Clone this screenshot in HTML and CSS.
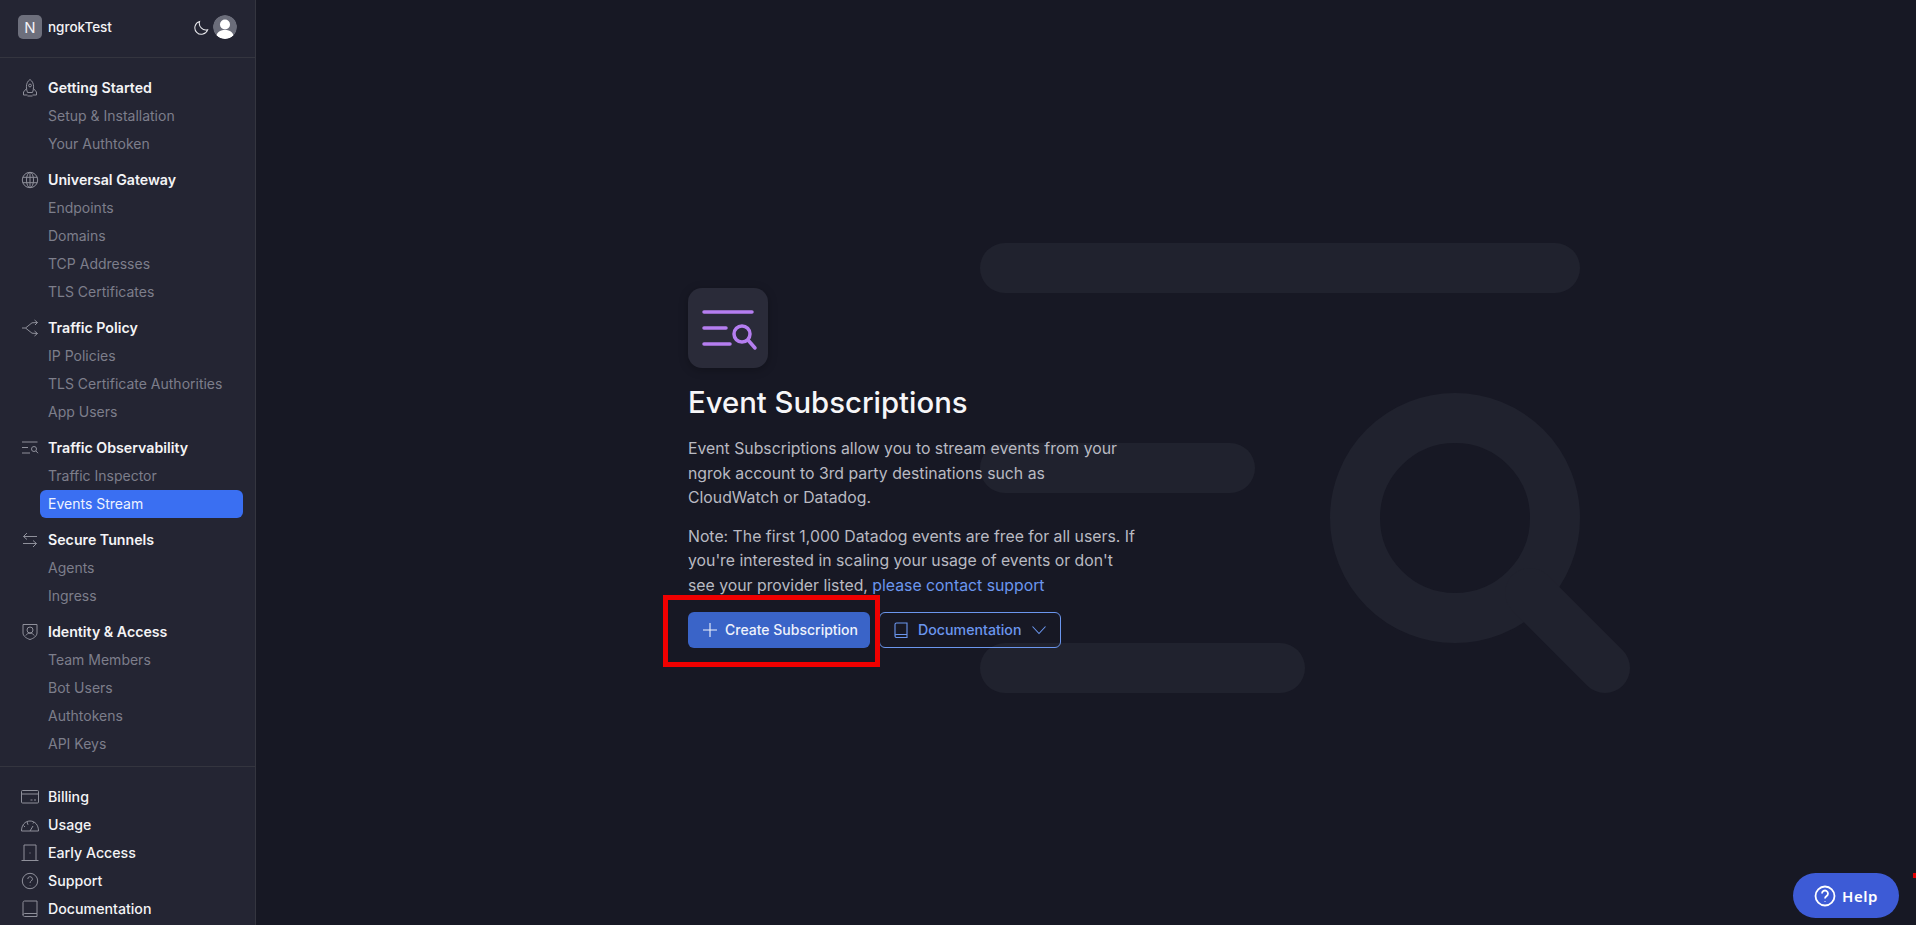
FILE: index.html
```html
<!DOCTYPE html>
<html lang="en">
<head>
<meta charset="utf-8">
<title>Event Subscriptions</title>
<link rel="stylesheet" href="styles.css">
</head>
<body>
<div class="app">
  <aside class="sidebar">
    <header class="account">
      <span class="avatar">N</span>
      <span class="account-name">ngrokTest</span>
      <svg class="moon" viewBox="0 0 16 16"><path d="M6 1.500a7 7 0 0 0 8.600 8.800A7 7 0 1 1 6 1.500Z"/></svg>
      <svg class="user" viewBox="0 0 24 24"><circle cx="12" cy="12" r="12" fill="#6b6d7a"/><circle cx="12" cy="9.500" r="5" fill="#fff"/><path d="M3.500 20.500c1-4 4.500-5.500 8.500-5.500s7.500 1.500 8.500 5.500A12 12 0 0 1 12 24a12 12 0 0 1-8.500-3.500Z" fill="#fff"/></svg>
    </header>
    <nav class="nav">
      <div class="group">
        <div class="head"><svg class="ico" viewBox="0 0 18 18"><path d="M9 .5c2.600 1.800 3.600 4.400 3.600 7.300 0 2.200-.5 4.200-1.100 5.700h-5c-.6-1.500-1.100-3.500-1.100-5.700C5.400 4.900 6.400 2.300 9 .5Z"/><circle cx="9" cy="6.500" r="1.400"/><path d="M5.600 9.500 2.500 13v3h4M12.400 9.500l3.100 3.500v3h-4M6.500 17h5"/></svg>Getting Started</div>
        <a class="sub">Setup &amp; Installation</a>
        <a class="sub">Your Authtoken</a>
      </div>
      <div class="group">
        <div class="head"><svg class="ico" viewBox="0 0 18 18"><circle cx="9" cy="9" r="7.700"/><ellipse cx="9" cy="9" rx="3.500" ry="7.700"/><path d="M1.800 6.300h14.400M1.800 11.700h14.400M9 1.300v15.400"/></svg>Universal Gateway</div>
        <a class="sub">Endpoints</a>
        <a class="sub">Domains</a>
        <a class="sub">TCP Addresses</a>
        <a class="sub">TLS Certificates</a>
      </div>
      <div class="group">
        <div class="head"><svg class="ico" viewBox="0 0 18 18"><path d="M1 9h3.500l6.500-5.200 5.500-.3M4.500 9l6.500 5.200 5.500.3M13.500 1l3 2.500-2.500 2.500M13.500 12l3 2.500-3 2.500"/></svg>Traffic Policy</div>
        <a class="sub">IP Policies</a>
        <a class="sub">TLS Certificate Authorities</a>
        <a class="sub">App Users</a>
      </div>
      <div class="group">
        <div class="head"><svg class="ico" viewBox="0 0 18 18"><path d="M1 3h15.500M1 8.500h6M1 14h8"/><circle cx="13" cy="10" r="2.500"/><path d="m15 12 2 2.200"/></svg>Traffic Observability</div>
        <a class="sub">Traffic Inspector</a>
        <a class="sub active">Events Stream</a>
      </div>
      <div class="group">
        <div class="head"><svg class="ico" viewBox="0 0 18 18"><path d="M16 5.500H2.500L6 2M2.500 5.500 6 8.500M2 12.500h13.500L12 9.500M15.500 12.500 12 16"/></svg>Secure Tunnels</div>
        <a class="sub">Agents</a>
        <a class="sub">Ingress</a>
      </div>
      <div class="group">
        <div class="head"><svg class="ico" viewBox="0 0 18 18"><path d="M2 1.500h14v8.500c0 3-3.500 5.500-7 6.500C5.500 15.500 2 13 2 10V1.500Z"/><circle cx="9" cy="7" r="3"/><path d="M4.800 12.500c.8-1.500 2.400-2.300 4.200-2.300s3.400.8 4.200 2.300"/></svg>Identity &amp; Access</div>
        <a class="sub">Team Members</a>
        <a class="sub">Bot Users</a>
        <a class="sub">Authtokens</a>
        <a class="sub">API Keys</a>
      </div>
    </nav>
    <footer class="bottom">
      <div class="head"><svg class="ico" viewBox="0 0 18 18"><rect x="0.500" y="2.500" width="17" height="12.500" rx="1"/><path d="M.5 6h17M9.500 12h2M13 12h2"/></svg>Billing</div>
      <div class="head"><svg class="ico" viewBox="0 0 18 18"><path d="M.5 15c0-6 3.500-10 8.500-10s8.500 4 8.500 10ZM9 15l3-5M6 5.800l1 3M13 6l-1 1.500M2.500 9.500 4 11"/></svg>Usage</div>
      <div class="head"><svg class="ico" viewBox="0 0 18 18"><path d="M.5 16.500h17M3 16.500V1h12v15.500"/><path d="M9 8.500v1"/></svg>Early Access</div>
      <div class="head"><svg class="ico" viewBox="0 0 18 18"><circle cx="9" cy="9" r="7.700"/><path d="M6.800 7a2.300 2.300 0 1 1 3.400 2c-.8.500-1.200 1-1.200 2M9 13v.4"/></svg>Support</div>
      <div class="head"><svg class="ico" viewBox="0 0 18 18"><path d="M2 15V2.500C2 1.700 2.700 1 3.500 1H16v12.500H3.500C2.700 13.500 2 14.200 2 15c0 .8.700 1.500 1.500 1.500H16v-3"/></svg>Documentation</div>
    </footer>
  </aside>
  <main class="main">
    <svg class="art" viewBox="0 0 700 500" aria-hidden="true">
      <rect x="20" y="23" width="600" height="50" rx="25"/>
      <rect x="20" y="223" width="275" height="50" rx="25"/>
      <rect x="20" y="423" width="325" height="50" rx="25"/>
      <circle cx="495" cy="298" r="100" class="ring"/>
      <path d="M570 373 645 448" class="ring"/>
    </svg>
    <section class="empty">
      <div class="badge">
        <svg viewBox="0 0 80 80"><path d="M16 24h48M16 40h22M16 56h26"/><circle cx="54" cy="46" r="8"/><path d="m60 52 7 8"/></svg>
      </div>
      <h1>Event Subscriptions</h1>
      <p>Event Subscriptions allow you to stream events from your ngrok account to 3rd party destinations such as CloudWatch or Datadog.</p>
      <p class="note">Note: The first 1,000 Datadog events are free for all users. If you're interested in scaling your usage of events or don't see your provider listed, <a class="link">please contact support</a></p>
      <div class="actions">
        <button class="btn primary"><svg viewBox="0 0 16 16"><path d="M8 1v14M1 8h14"/></svg>Create Subscription</button>
        <button class="btn outline"><svg viewBox="0 0 16 16"><path d="M2 14V2.500C2 1.700 2.700 1 3.500 1H14v11.500H3.500C2.700 12.500 2 13.200 2 14c0 .8.700 1.500 1.500 1.500H14v-3"/></svg>Documentation<svg class="chev" viewBox="0 0 16 16"><path d="m1.500 4.500 6.500 7 6.500-7"/></svg></button>
        <span class="mark"></span>
      </div>
    </section>
    <button class="help"><svg viewBox="0 0 22 22"><circle cx="11" cy="11" r="9.500"/><path d="M8 8.500a3 3 0 1 1 4.500 2.600c-1 .6-1.500 1.200-1.500 2.400M11 16v.4"/></svg>Help</button>
    <span class="dot"></span>
  </main>
</div>
</body>
</html>
```
FILE: styles.css
```css
* { box-sizing: border-box; }
html, body { margin: 0; height: 100%; }
body { background: #171824; color: #fff; font-family: Inter, "Noto Sans", sans-serif; overflow: hidden; }
.app { display: flex; height: 925px; }
.sidebar { width: 256px; flex: none; background: #242533; border-right: 1px solid #34353f; display: flex; flex-direction: column; }
.account { height: 58px; flex: none; display: flex; align-items: center; padding: 0 18px 3px; border-bottom: 1px solid #34353f; }
.avatar { width: 24px; height: 24px; border-radius: 5px; background: #6d6f7c; display: flex; align-items: center; justify-content: center; font-size: 15px; color: #f2f2f5; }
.account-name { margin-left: 6px; font-size: 13.500px; font-weight: 500; color: #f4f4f6; flex: 1; }
.moon { width: 15px; height: 15px; fill: none; stroke: #e8e8ec; stroke-width: 1.100; margin-right: 4px; }
.user { width: 24px; height: 24px; border-radius: 50%; }
.nav { flex: 1; padding: 16px 12px 0 20px; display: flex; flex-direction: column; gap: 8px; }
.group { display: flex; flex-direction: column; }
.head { height: 28px; padding-bottom: 1px; display: flex; align-items: center; gap: 9px; font-size: 14.200px; font-weight: 600; color: #f4f4f6; }
.ico { width: 18px; height: 18px; margin-left: 1px; flex: none; fill: none; stroke: #8f909b; stroke-width: 1; }
.sub { height: 28px; padding: 0 0 1px 8px; display: flex; align-items: center; margin-left: 20px; font-size: 14px; color: #7d7e8b; border-radius: 6px; }
.sub.active { background: #3a6ff2; color: #eef3ff; }
.bottom { flex: none; height: 159px; padding: 16px 12px 0 20px; border-top: 1px solid #34353f; }
.bottom .head { font-weight: 500; }
.main { flex: 1; position: relative; }
.art { position: absolute; left: 704px; top: 220px; width: 700px; height: 500px; fill: #20222e; }
.art .ring { fill: none; stroke: #20222e; stroke-width: 50px; }
.art path.ring { stroke-linecap: round; }
.empty { position: absolute; left: 432px; top: 288px; width: 480px; }
.badge { width: 80px; height: 80px; border-radius: 14px; background: #2a2b39; box-shadow: 0 2px 10px rgba(0,0,0,.25); }
.badge svg { width: 80px; height: 80px; fill: none; stroke: #b57ef0; stroke-width: 3.500; stroke-linecap: round; }
h1 { margin: 17px 0 0; font-size: 29.300px; line-height: 36px; font-weight: 500; color: #f6f6f8; }
p { margin: 16px 0 0; font-size: 15.800px; line-height: 24.500px; color: #b9bac2; width: 450px; }
p.note { margin-top: 14px; }
.link { color: #6b96ee; }
.actions { display: flex; gap: 9px; margin-top: 14px; position: relative; }
.btn { height: 36px; border-radius: 6px; display: flex; align-items: center; font-family: inherit; font-size: 14.200px; font-weight: 500; padding: 0 13px 1px; border: 1px solid transparent; white-space: nowrap; }
.btn svg { width: 16px; height: 16px; flex: none; fill: none; stroke: currentColor; stroke-width: 1.100; }
.primary { width: 182px; background: #3a64c8; color: #eef2fc; gap: 7px; font-size: 14px; }
.outline { width: 182px; background: transparent; color: #6b96ee; border-color: #6b96ee; gap: 9px; }
.outline .chev { margin-left: 1px; }
.mark { position: absolute; left: -25px; top: -17px; width: 217px; height: 72px; border: 5px solid #f00000; pointer-events: none; }
.help { position: absolute; right: 17px; bottom: 7px; width: 106px; height: 45px; border: 0; border-radius: 23px; background: #3d5bd6; color: #fff; display: flex; align-items: center; justify-content: center; gap: 6px; font-family: "Noto Sans", sans-serif; font-size: 15px; font-weight: 600; letter-spacing: .5px; }
.help svg { width: 22px; height: 22px; fill: none; stroke: #fff; stroke-width: 1.800; }
.dot { position: absolute; right: 0; top: 873px; width: 3px; height: 5px; background: #e00000; }
```
